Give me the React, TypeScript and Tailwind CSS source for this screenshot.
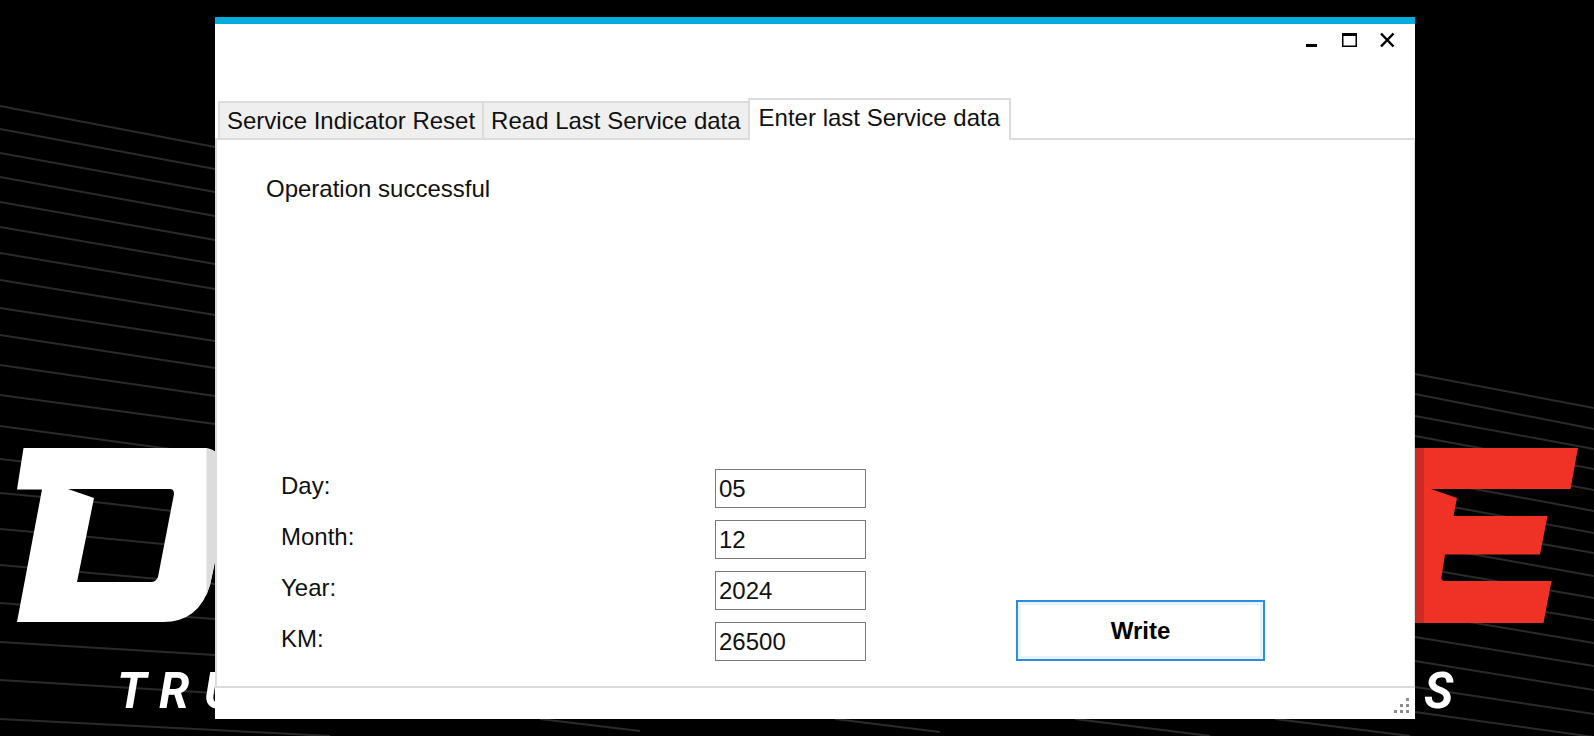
import { useState } from "react";

type Field = {
  id: string;
  label: string;
  value: string;
};

const tabs = ["Service Indicator Reset", "Read Last Service data", "Enter last Service data"];

const initialFields: Field[] = [
  { id: "day", label: "Day:", value: "05" },
  { id: "month", label: "Month:", value: "12" },
  { id: "year", label: "Year:", value: "2024" },
  { id: "km", label: "KM:", value: "26500" }
];

const backdropLines = [
  "M0 106L215 147",
  "M0 129L215 169",
  "M0 153L215 192",
  "M0 177L215 216",
  "M0 202L215 240",
  "M0 227L215 264",
  "M0 253L215 289",
  "M0 280L215 315",
  "M0 308L215 341",
  "M0 335L215 368",
  "M0 365L215 396",
  "M0 395L215 424",
  "M0 426L215 455",
  "M0 459L215 484",
  "M0 493L95 502L215 516",
  "M0 529L90 537L215 549",
  "M0 565L80 572L215 584",
  "M0 603L215 619",
  "M0 642L215 655",
  "M0 680L215 693",
  "M0 719L215 730L330 736",
  "M540 719L640 731",
  "M835 719L940 732",
  "M1075 719L1210 736",
  "M1275 719L1410 736",
  "M1415 374L1594 408",
  "M1415 394L1594 429",
  "M1415 416L1594 449",
  "M1415 436L1594 469",
  "M1415 457L1594 490",
  "M1415 478L1594 511",
  "M1415 500L1594 533",
  "M1415 522L1594 553",
  "M1415 544L1594 576",
  "M1415 567L1594 598",
  "M1415 590L1594 620",
  "M1415 613L1594 643",
  "M1415 637L1594 666",
  "M1415 661L1594 690",
  "M1415 687L1594 714",
  "M1415 712L1594 737"
];

function Backdrop() {
  return (
    <svg
      className="fixed inset-0 h-full w-full"
      viewBox="0 0 1594 736"
      preserveAspectRatio="xMidYMid slice"
      aria-hidden="true"
    >
      <path d={backdropLines.join("")} fill="none" stroke="#2a2a2a" strokeWidth="2" />
      <path
        fill="#fff"
        fillRule="evenodd"
        d="M23.500 448H206Q222 450 221 470V530C217 550 213 573 210 585Q199 622 163 622H17L42 489.500H17ZM68 489L94 498L77 582H151Q156 582 158 577L174 494Q174 489 170 489Z"
      />
      <path fill="#dcdcdc" d="M206.500 449Q212 449 215 452V562L210 585L206.500 595Z" />
      <path
        fill="#f03126"
        d="M1410 448H1578L1570.500 489H1431L1457 498L1453.500 516H1547.500L1540 554.500H1445L1441.500 577Q1441 581 1445 581H1551.500L1543.500 623H1410Z"
      />
      <path fill="#cc2a22" d="M1410 448H1424V623H1410Z" />
      <g fill="#fff" className="font-['Roboto',sans-serif] text-[49px] font-bold italic">
        <text x="117" y="708">T</text>
        <text x="159" y="708">R</text>
        <text x="204" y="708">U</text>
        <text x="1424" y="708">S</text>
      </g>
    </svg>
  );
}

function TitleBar() {
  return (
    <header className="flex h-[73px] justify-end gap-[18px] border-t-7 border-[#00aedb] pr-[18px] pt-2">
      <button type="button" aria-label="Minimize" className="h-5 w-5">
        <svg viewBox="0 0 20 20" className="h-5 w-5">
          <path d="M5 12h11v3H5z" />
        </svg>
      </button>
      <button type="button" aria-label="Maximize" className="h-5 w-5">
        <svg viewBox="0 0 20 20" className="h-5 w-5">
          <path fillRule="evenodd" d="M3 1h15v14H3zM4.500 4v9.500h12V4z" />
        </svg>
      </button>
      <button type="button" aria-label="Close" className="h-5 w-5">
        <svg viewBox="0 0 20 20" className="h-5 w-5">
          <path d="M4 1.500L16.500 14.500M16.500 1.500L4 14.500" stroke="#000" strokeWidth="2.500" />
        </svg>
      </button>
    </header>
  );
}

function SizeGrip() {
  return (
    <svg viewBox="0 0 15 15" className="h-[15px] w-[15px]" fill="#8c8c8c" aria-hidden="true">
      <path d="M12 0h3v3h-3zM6 6h3v3H6zM12 6h3v3h-3zM0 12h3v3H0zM6 12h3v3H6zM12 12h3v3h-3z" />
    </svg>
  );
}

export default function App() {
  const [active, setActive] = useState(2);
  const [fields, setFields] = useState(initialFields);

  const update = (id: string, value: string) =>
    setFields(fields.map((field) => (field.id === id ? { ...field, value } : field)));

  return (
    <div className="flex min-h-screen flex-col bg-black pb-[17px] pl-[215px] pr-[179px] pt-[17px]">
      <Backdrop />
      <main className="relative flex flex-1 flex-col bg-white font-['Liberation_Sans',Arial,sans-serif] text-2xl leading-7 text-[#111]">
        <TitleBar />

        <div role="tablist" className="flex h-[50px] items-end border-b-2 border-[#dcdcdc] pl-[3px]">
          {tabs.map((tab, index) => (
            <button
              key={tab}
              type="button"
              role="tab"
              aria-selected={active === index}
              onClick={() => setActive(index)}
              className={
                active === index
                  ? "-mb-[2px] h-[42px] whitespace-nowrap border-x-2 border-t-2 border-[#dcdcdc] bg-white px-[9px] pb-2 pt-1"
                  : "h-[37px] whitespace-nowrap border-l-2 border-t-2 border-[#dcdcdc] bg-[#efefef] px-[7px] pb-[3px] pt-1"
              }
            >
              {tab}
            </button>
          ))}
        </div>

        <form
          className="flex flex-1 flex-col justify-between border-b-2 border-l-2 border-r border-[#dcdcdc] pb-[25px] pt-[35px]"
          onSubmit={(event) => event.preventDefault()}
        >
          <p role="status" className="pl-[49px]">
            Operation successful
          </p>

          <div className="flex items-end gap-[150px] pl-16 pr-[149px]">
            <div className="flex flex-1 flex-col gap-3">
              {fields.map((field) => (
                <div key={field.id} className="flex items-start justify-between">
                  <label htmlFor={field.id} className="pt-[3px]">
                    {field.label}
                  </label>
                  <input
                    id={field.id}
                    type="text"
                    value={field.value}
                    onChange={(event) => update(field.id, event.target.value)}
                    className="h-[39px] w-[151px] border border-[#7a7a7a] bg-white px-[3px] outline-none"
                  />
                </div>
              ))}
            </div>
            <button
              type="submit"
              className="h-[61px] w-[249px] border-2 border-[#2b8ddb] bg-white font-bold text-black inset-ring-3 inset-ring-[#e8f2fb]"
            >
              Write
            </button>
          </div>
        </form>

        <footer className="flex h-[31px] items-start justify-end pr-[6px] pt-[10px]">
          <SizeGrip />
        </footer>
      </main>
    </div>
  );
}
